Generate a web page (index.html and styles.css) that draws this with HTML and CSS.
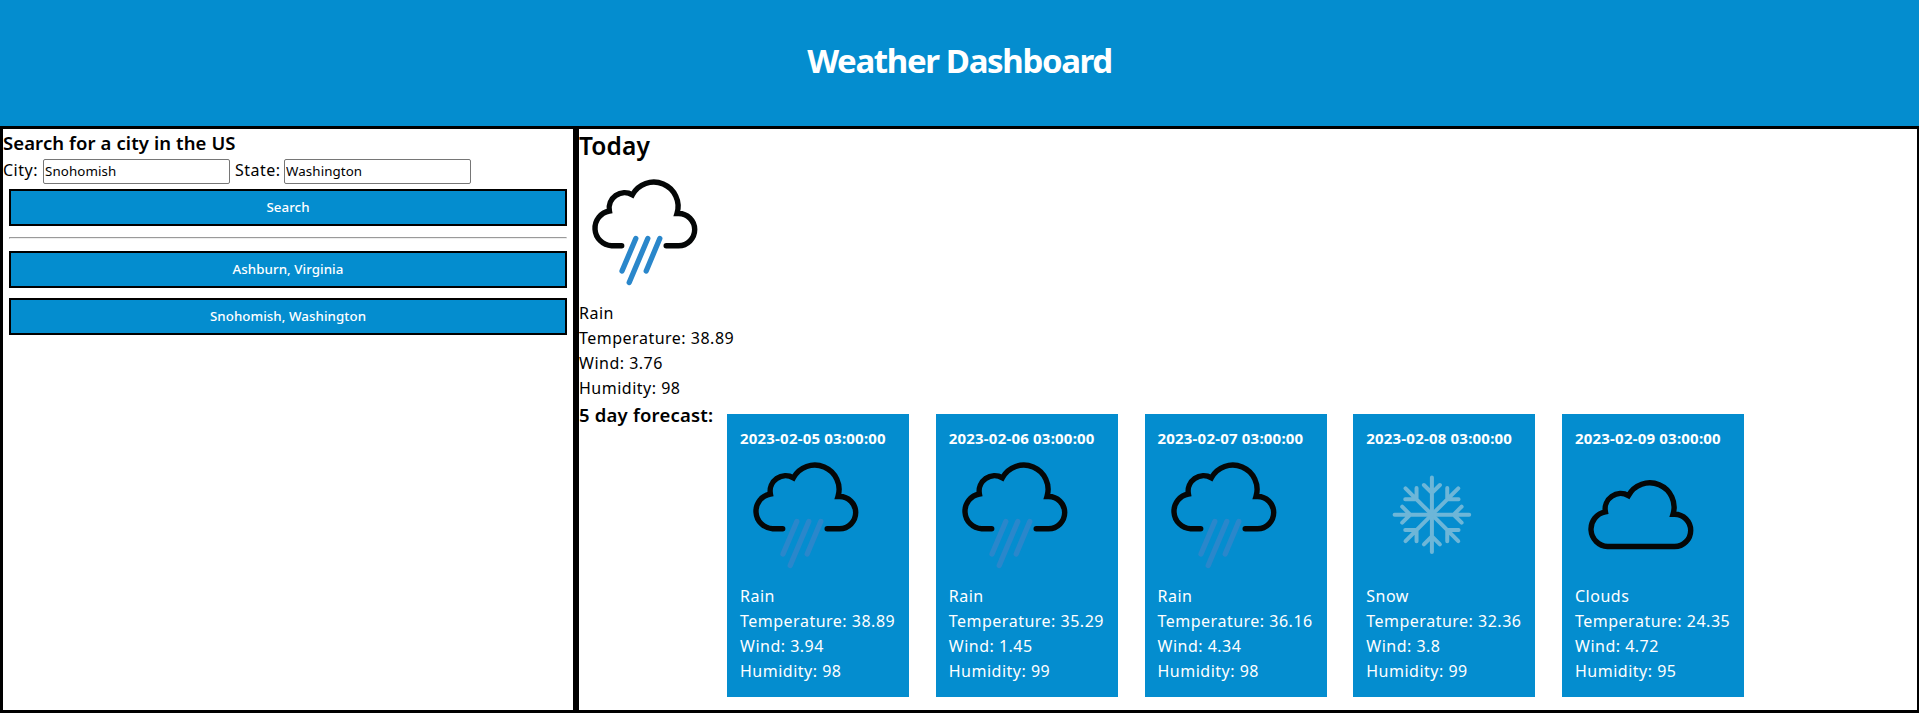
FILE: index.html
```html
<!DOCTYPE html>
<html lang="en">
<head>
<meta charset="utf-8">
<title>Weather Dashboard</title>
<link rel="stylesheet" href="styles.css">
</head>
<body>
<svg class="defs" width="0" height="0">
  <defs>
    <symbol id="rain" viewBox="0 0 130 135">
      <path class="cloud" d="M42.7 79.7H32.6A17.5 17.5 0 0 1 30.4 45A15.5 15.5 0 0 1 53.4 28.8A24.3 24.3 0 0 1 98 47.5H99.6A16.1 16.1 0 0 1 99.6 79.7H87.2"/>
      <path class="drops" d="M56.8 72.5L43 105M68.8 72.5L50.2 116.5M80.8 72.5L67.2 105"/>
    </symbol>
    <symbol id="clouds" viewBox="0 0 130 135">
      <path class="cloud" transform="translate(0 17.8)" d="M32.6 79.7A17.5 17.5 0 0 1 30.4 45A15.5 15.5 0 0 1 53.4 28.8A24.3 24.3 0 0 1 98 47.5H99.6A16.1 16.1 0 0 1 99.6 79.7Z"/>
    </symbol>
    <symbol id="snow" viewBox="0 0 130 135">
      <g class="flake" transform="translate(65.9 65.7)">
        <path id="arm" d="M0 0V-37.3M-8 -29.7L0 -21.7L8 -29.7"/>
        <use href="#arm" transform="rotate(45)"/>
        <use href="#arm" transform="rotate(90)"/>
        <use href="#arm" transform="rotate(135)"/>
        <use href="#arm" transform="rotate(180)"/>
        <use href="#arm" transform="rotate(225)"/>
        <use href="#arm" transform="rotate(270)"/>
        <use href="#arm" transform="rotate(315)"/>
      </g>
    </symbol>
  </defs>
</svg>
<header class="header"><h1>Weather Dashboard</h1></header>
<main class="main">
  <section class="search">
    <h3>Search for a city in the US</h3>
    <form class="fields">
      <label for="city">City:</label><input id="city" type="text" value="Snohomish">
      <label for="state">State:</label><input id="state" type="text" value="Washington">
    </form>
    <button class="btn">Search</button>
    <hr class="rule">
    <button class="btn">Ashburn, Virginia</button>
    <button class="btn">Snohomish, Washington</button>
  </section>
  <section class="weather">
    <div class="today">
      <h2>Today</h2>
      <svg class="icon"><use href="#rain"/></svg>
      <p>Rain</p><p>Temperature: 38.89</p><p>Wind: 3.76</p><p>Humidity: 98</p>
    </div>
    <div class="forecast">
      <h3>5 day forecast:</h3>
      <article class="card"><h4>2023-02-05 03:00:00</h4><svg class="icon"><use href="#rain"/></svg><p>Rain</p><p>Temperature: 38.89</p><p>Wind: 3.94</p><p>Humidity: 98</p></article>
      <article class="card"><h4>2023-02-06 03:00:00</h4><svg class="icon"><use href="#rain"/></svg><p>Rain</p><p>Temperature: 35.29</p><p>Wind: 1.45</p><p>Humidity: 99</p></article>
      <article class="card"><h4>2023-02-07 03:00:00</h4><svg class="icon"><use href="#rain"/></svg><p>Rain</p><p>Temperature: 36.16</p><p>Wind: 4.34</p><p>Humidity: 98</p></article>
      <article class="card"><h4>2023-02-08 03:00:00</h4><svg class="icon"><use href="#snow"/></svg><p>Snow</p><p>Temperature: 32.36</p><p>Wind: 3.8</p><p>Humidity: 99</p></article>
      <article class="card"><h4>2023-02-09 03:00:00</h4><svg class="icon"><use href="#clouds"/></svg><p>Clouds</p><p>Temperature: 24.35</p><p>Wind: 4.72</p><p>Humidity: 95</p></article>
    </div>
  </section>
</main>
</body>
</html>
```
FILE: styles.css
```css
* { box-sizing: border-box; margin: 0; padding: 0; }
body {
  font-family: "Noto Sans", sans-serif;
  font-size: 16px;
  line-height: 25px;
  letter-spacing: 0.5px;
  color: #000;
  background: #fff;
  overflow: hidden;
}
h1, h2, h3 { font-weight: 600; }
.defs { position: absolute; }
.header {
  height: 126px;
  display: flex;
  align-items: center;
  justify-content: center;
  background: #048dcf;
  color: #fff;
}
.header h1 { font-size: 33px; font-weight: 700; line-height: 44px; padding-bottom: 5px; letter-spacing: -1.35px; }
.main { display: flex; height: 587px; }
.search { width: 576px; border: 3px solid #000; }
.search h3 { font-size: 18.5px; line-height: 27px; padding-bottom: 2px; letter-spacing: 0.1px; }
.fields { display: flex; align-items: center; height: 25px; margin-top: 1px; }
.fields label { height: 25px; line-height: 23px; width: 40px; flex: none; }
.fields label[for="state"] { width: 54px; padding-left: 5px; }
.fields input {
  width: 187px;
  height: 25px;
  padding: 0 1px 1px;
  border: 1px solid #767676;
  border-radius: 2px;
  font: 13.33px "Noto Sans", sans-serif;
  letter-spacing: 0.1px;
}
.btn {
  display: block;
  width: 558px;
  height: 37px;
  margin: 5px 6px 11px;
  padding-bottom: 2px;
  border: 2px solid #000;
  background: #048dcf;
  color: #fff;
  font: 500 13.33px "Noto Sans", sans-serif;
  letter-spacing: 0.05px;
}
.rule { height: 2px; margin: 0 6px 12px; border: 1px solid; border-color: #9a9a9a #eee #eee #9a9a9a; }
.rule ~ .btn { margin: 0 6px 10px; }
.weather { flex: 1; border: 3px solid #000; border-right-width: 2px; }
.today h2 { font-size: 24.5px; line-height: 33px; padding-bottom: 4px; letter-spacing: 0.1px; }
.icon { display: block; width: 130px; height: 135px; }
.forecast { display: flex; }
.forecast h3 { width: 148px; font-size: 18.5px; line-height: 28px; letter-spacing: 0.2px; white-space: nowrap; }
.card { width: 182px; height: 283px; margin: 13px 26.75px 0 0; padding: 14px 13px; background: #048dcf; color: #fff; }
.card p, .card h4 { white-space: nowrap; }
.card h4 { height: 21px; font-size: 15px; line-height: 20px; letter-spacing: 0.2px; }
.cloud, .drops, .flake { fill: none; stroke-linecap: round; }
.cloud { stroke: #050707; stroke-width: 5.4; }
.drops { stroke: #2a87cb; stroke-width: 5.3; }
.flake { stroke: #6db6d8; stroke-width: 4; }
```
